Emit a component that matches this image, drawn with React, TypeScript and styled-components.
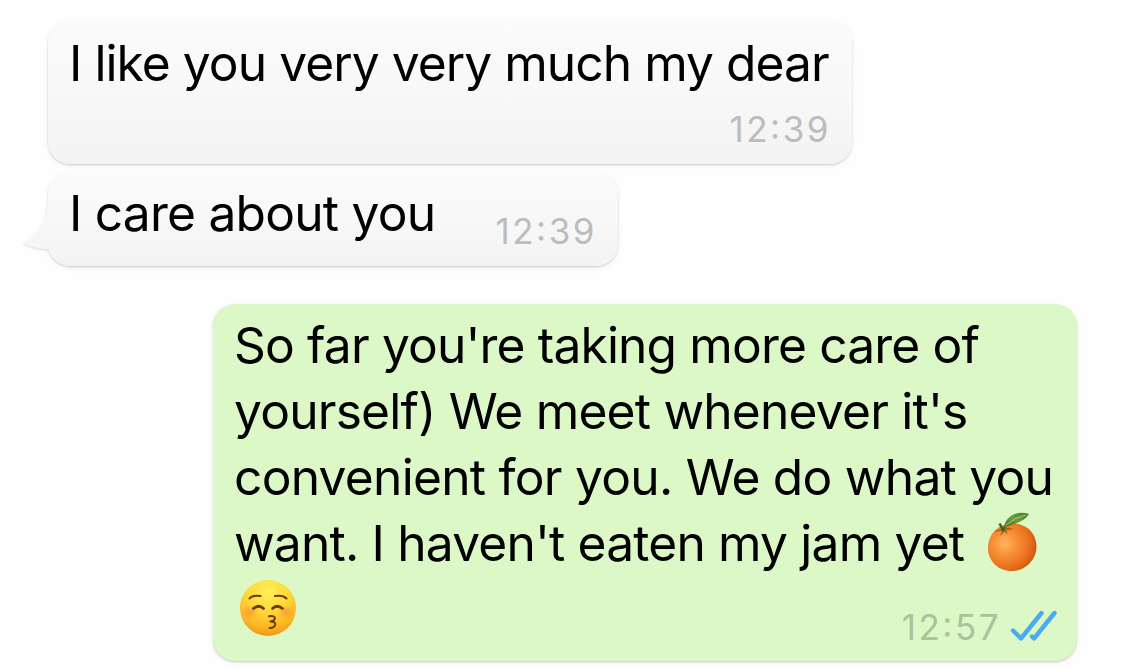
import styled, { createGlobalStyle, css } from "styled-components";

const messages = [
  {
    id: 1,
    time: "12:39",
    width: 804,
    height: 143,
    top: 9,
    gap: 8,
    lines: [{ text: "I like you very very much my dear", spacing: -0.95 }],
  },
  {
    id: 2,
    time: "12:39",
    width: 570,
    height: 94,
    top: 8,
    gap: 38,
    tail: true,
    lines: [{ text: "I care about you", spacing: -0.78 }],
  },
  {
    id: 3,
    time: "12:57",
    width: 864,
    height: 357,
    top: 8,
    gap: 0,
    mine: true,
    lines: [
      { text: "So far you're taking more care of", spacing: -0.85 },
      { text: "yourself) We meet whenever it's", spacing: -0.79 },
      { text: "convenient for you. We do what you", spacing: -0.74 },
      { text: "want. I haven't eaten my jam yet", spacing: -0.82, fruit: true },
    ],
  },
];

const Orange = () => (
  <OrangeIcon viewBox="0 0 52 62">
    <defs>
      <radialGradient id="peel" cx="0.35" cy="0.42" r="0.68">
        <stop offset="0" stopColor="#ffb565" />
        <stop offset="0.35" stopColor="#f89238" />
        <stop offset="0.75" stopColor="#e96f1b" />
        <stop offset="1" stopColor="#cc5512" />
      </radialGradient>
      <linearGradient id="leaf" x1="0" y1="1" x2="1" y2="0">
        <stop offset="0" stopColor="#3f6f23" />
        <stop offset="0.5" stopColor="#6d9d3c" />
        <stop offset="1" stopColor="#47782a" />
      </linearGradient>
    </defs>
    <path
      d="M26 12.500C40 12 50.500 22 50.500 35.500C50.500 49 39 60 26 60C12 60 2 50 2 37C2 23 12 13 26 12.500Z"
      fill="url(#peel)"
    />
    <path
      d="M17 18Q11 18 8 21Q13 20 16.500 20Q14.500 22 14 25Q17 22.500 18 20Q19 22 21.500 23Q21.500 21 20 19Q24 19.500 27 18Q23 16 18 16Z"
      fill="#9c6a1d"
    />
    <path d="M13.500 12.500L17 19L18.500 16" fill="none" stroke="#3e5b22" strokeWidth="2.4" />
    <path d="M18 16C20 5 31 -1 43 3C38 11 27 14 18 16Z" fill="url(#leaf)" />
    <path d="M20 14Q29 6 40 4" fill="none" stroke="#a9c879" strokeWidth="1" />
  </OrangeIcon>
);

const KissFace = () => (
  <FaceIcon viewBox="0 0 58 58">
    <defs>
      <radialGradient id="skin" cx="0.5" cy="0.2" r="0.82">
        <stop offset="0" stopColor="#fff05a" />
        <stop offset="0.45" stopColor="#ffd838" />
        <stop offset="0.8" stopColor="#fcb422" />
        <stop offset="1" stopColor="#ed9017" />
      </radialGradient>
      <radialGradient id="blush">
        <stop offset="0" stopColor="#ff7038" stopOpacity="0.5" />
        <stop offset="1" stopColor="#ff7038" stopOpacity="0" />
      </radialGradient>
    </defs>
    <circle cx="29" cy="29" r="28" fill="url(#skin)" />
    <ellipse cx="11" cy="33" rx="9" ry="7" fill="url(#blush)" />
    <ellipse cx="47" cy="33" rx="9" ry="7" fill="url(#blush)" />
    <g fill="none" stroke="#6b3b0b" strokeLinecap="round" strokeLinejoin="round">
      <path d="M10.500 19.500Q13 15.800 21.500 17" strokeWidth="2" />
      <path d="M36 17Q44 15.800 47.500 19.500" strokeWidth="2" />
      <path d="M14.500 29.500Q20 25 24.500 29.500" strokeWidth="2.700" />
      <path d="M33.500 29.500Q38 25 43.500 29.500" strokeWidth="2.700" />
      <path
        d="M30 37.200Q36 36.500 36 39.500Q35 42 31.500 42.500Q36.800 42.500 36.200 46Q35 49.300 30.500 49"
        strokeWidth="2"
      />
    </g>
  </FaceIcon>
);

const ReadMark = () => (
  <Checks viewBox="0 0 48 32">
    <path d="M3 20.500L11 28.500L31.500 3" />
    <path d="M22 26.500L24 28.500L44.500 3" />
  </Checks>
);

const Tail = () => (
  <TailShape viewBox="0 0 30 50">
    <defs>
      <linearGradient id="tailFill" x1="0" y1="0" x2="0" y2="1">
        <stop offset="0" stopColor="#f9f9f9" />
        <stop offset="1" stopColor="#f5f5f5" />
      </linearGradient>
    </defs>
    <path d="M25 0C25 15 21 24 1 37C8 41 17 43 26 43.500L30 42V0Z" fill="url(#tailFill)" />
  </TailShape>
);

const App = () => {
  return (
    <Page>
      <GlobalStyle />
      {messages.map((msg) => (
        <Bubble
          key={msg.id}
          $mine={msg.mine}
          $width={msg.width}
          $height={msg.height}
          $top={msg.top}
          $gap={msg.gap}
        >
          {msg.tail && <Tail />}
          {msg.lines.map((line) => (
            <Line key={line.text} $spacing={line.spacing}>
              {line.text}
              {line.fruit && <Orange />}
            </Line>
          ))}
          {msg.mine && <KissFace />}
          <Meta $mine={msg.mine}>
            <Time>{msg.time}</Time>
            {msg.mine && <ReadMark />}
          </Meta>
        </Bubble>
      ))}
    </Page>
  );
};

export default App;

const GlobalStyle = createGlobalStyle`
  * {
    box-sizing: border-box;
  }

  body {
    margin: 0;
    background-color: #fefefe;
    overflow: hidden;
  }
`;

const Page = styled.div`
  width: 1125px;
  height: 668px;
  padding: 21px 48px 0;
  display: flex;
  flex-direction: column;
  align-items: flex-start;
  overflow: hidden;
  font-family: Inter, "Liberation Sans", sans-serif;
  color: #000;
`;

const Bubble = styled.div<{
  $mine?: boolean;
  $width: number;
  $height: number;
  $top: number;
  $gap: number;
}>`
  position: relative;
  flex-shrink: 0;
  width: ${({ $width }) => $width}px;
  height: ${({ $height }) => $height}px;
  margin-bottom: ${({ $gap }) => $gap}px;
  padding: ${({ $top }) => $top}px 21px 0;
  border-radius: 22px;
  background: linear-gradient(#fbfbfb, #f8f8f8 50%, #f3f3f3);
  box-shadow: 0 1px 2px rgba(0, 0, 0, 0.18), 0 2px 6px rgba(0, 0, 0, 0.05);

  ${({ $mine }) =>
    $mine &&
    css`
      margin-left: 165px;
      background: #dcf8c6;
    `}
`;

const Line = styled.div<{ $spacing: number }>`
  display: flex;
  align-items: center;
  height: 66px;
  line-height: 66px;
  font-size: 49.7px;
  letter-spacing: ${({ $spacing }) => $spacing}px;
  white-space: pre;
`;

const Meta = styled.div<{ $mine?: boolean }>`
  position: absolute;
  right: ${({ $mine }) => ($mine ? 19 : 21)}px;
  bottom: ${({ $mine }) => ($mine ? 12 : 13)}px;
  display: flex;
  align-items: center;
  gap: 9px;
  color: ${({ $mine }) => ($mine ? "#a9c39a" : "#bcbcbc")};
`;

const Time = styled.span`
  font-size: 35px;
  line-height: 44px;
  letter-spacing: 2.5px;
  /* raises the colon to the middle of the digits */
  font-feature-settings: "case";
`;

const OrangeIcon = styled.svg`
  flex-shrink: 0;
  width: 52px;
  height: 62px;
  margin: -3px 0 0 21.5px;
`;

const FaceIcon = styled.svg`
  display: block;
  width: 58px;
  height: 58px;
  margin: 3px 0 0 5px;
`;

const Checks = styled.svg`
  width: 48px;
  height: 32px;
  margin-top: -2px;
  fill: none;
  stroke: #4aacf0;
  stroke-width: 4.4;
  stroke-linecap: round;
  stroke-linejoin: round;
`;

const TailShape = styled.svg`
  position: absolute;
  left: -26px;
  bottom: 10px;
  width: 30px;
  height: 50px;
  filter: drop-shadow(0 1px 1px rgba(0, 0, 0, 0.13));
  clip-path: inset(0 3px -4px -4px);
`;
